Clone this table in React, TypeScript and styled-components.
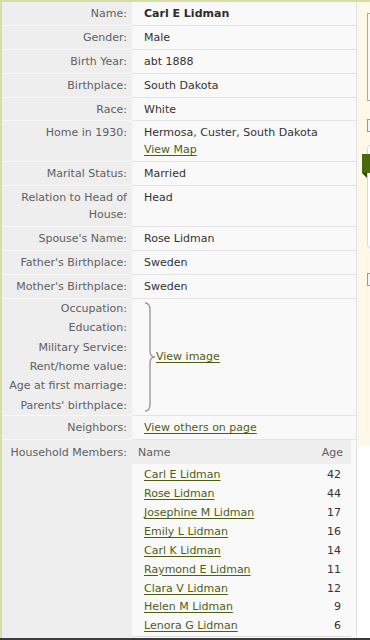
import React, { ReactNode } from "react";
import styled, { createGlobalStyle } from "styled-components";

const GlobalStyle = createGlobalStyle`
  html, body {
    margin: 0;
    padding: 0;
    background: #fff;
  }
  body {
    font-family: Verdana, "DejaVu Sans", sans-serif;
    font-size: 11px;
    color: #333;
  }
`;

type FieldType = {
  label: string;
  value: ReactNode;
};

const imageFields = [
  "Occupation:",
  "Education:",
  "Military Service:",
  "Rent/home value:",
  "Age at first marriage:",
  "Parents' birthplace:",
];

const household = [
  { name: "Carl E Lidman", age: 42 },
  { name: "Rose Lidman", age: 44 },
  { name: "Josephine M Lidman", age: 17 },
  { name: "Emily L Lidman", age: 16 },
  { name: "Carl K Lidman", age: 14 },
  { name: "Raymond E Lidman", age: 11 },
  { name: "Clara V Lidman", age: 12 },
  { name: "Helen M Lidman", age: 9 },
  { name: "Lenora G Lidman", age: 6 },
];

const App = () => {
  const fields: FieldType[] = [
    { label: "Name:", value: <strong>Carl E Lidman</strong> },
    { label: "Gender:", value: "Male" },
    { label: "Birth Year:", value: "abt 1888" },
    { label: "Birthplace:", value: "South Dakota" },
    { label: "Race:", value: "White" },
    {
      label: "Home in 1930:",
      value: (
        <>
          Hermosa, Custer, South Dakota
          <br />
          <TextLink href="#">View Map</TextLink>
        </>
      ),
    },
    { label: "Marital Status:", value: "Married" },
    { label: "Relation to Head of House:", value: "Head" },
    { label: "Spouse's Name:", value: "Rose Lidman" },
    { label: "Father's Birthplace:", value: "Sweden" },
    { label: "Mother's Birthplace:", value: "Sweden" },
  ];

  return (
    <>
      <GlobalStyle />
      <Page>
        <Main>
          {fields.map((f, i) => (
            <Row key={i}>
              <Label>{f.label}</Label>
              <Value>{f.value}</Value>
            </Row>
          ))}
          <Row>
            <Label $tight>
              {imageFields.map((l, i) => (
                <div key={i}>{l}</div>
              ))}
            </Label>
            <BraceValue>
              <svg width="12" height="110" viewBox="0 0 12 110">
                <path
                  d="M1 1 Q6 1 6 8 L6 49 Q6 55 11 55 Q6 55 6 61 L6 102 Q6 109 1 109"
                  fill="none"
                  stroke="#9a9a9a"
                  strokeWidth="1.4"
                />
              </svg>
              <TextLink href="#">View image</TextLink>
            </BraceValue>
          </Row>
          <Row>
            <Label>Neighbors:</Label>
            <Value>
              <TextLink href="#">View others on page</TextLink>
            </Value>
          </Row>
          <Row $grow>
            <Label $last>Household Members:</Label>
            <HouseholdCell>
              <HouseTable>
                <HouseHead>
                  <span>Name</span>
                  <span>Age</span>
                </HouseHead>
                <HouseBody>
                  {household.map((m, i) => (
                    <HouseRow key={i}>
                      <TextLink href="#">{m.name}</TextLink>
                      <span>{m.age}</span>
                    </HouseRow>
                  ))}
                </HouseBody>
              </HouseTable>
            </HouseholdCell>
          </Row>
        </Main>
        <Side>
          <SidePanel>
            <FrameBox />
            <CheckBox />
            <TabPanel>
              <GreenTab />
            </TabPanel>
            <CheckBox $late />
          </SidePanel>
        </Side>
      </Page>
    </>
  );
};

const Page = styled.div`
  width: 370px;
  height: 640px;
  box-sizing: border-box;
  overflow: hidden;
  display: flex;
  border-top: 2px solid #d6dea6;
  border-bottom: 2px solid #3b3b3b;
`;

const Main = styled.div`
  flex: 0 0 357px;
  box-sizing: border-box;
  display: flex;
  flex-direction: column;
  border-left: 2px solid #d6dea6;
  border-right: 1px solid #e2e2e2;
  background: #f9f9f9;
`;

const Row = styled.div<{ $grow?: boolean }>`
  display: grid;
  grid-template-columns: 130px 1fr;
  ${({ $grow }) => ($grow ? "flex: 1;" : "")}
`;

const Label = styled.div<{ $tight?: boolean; $last?: boolean }>`
  background: #eeeeee;
  color: #606060;
  text-align: right;
  padding: ${({ $tight, $last }) =>
    $tight ? "0 5px 0 4px" : $last ? "4px 5px 0 4px" : "3px 5px 2.9px 4px"};
  line-height: ${({ $tight }) => ($tight ? "19.4px" : "17px")};
  border-bottom: ${({ $last }) => ($last ? "none" : "1px solid #f7f7f7")};
`;

const Value = styled.div`
  padding: 3px 6px 2.9px 12px;
  line-height: 17px;
  border-bottom: 1px solid #e4e4e4;
  strong {
    font-weight: bold;
    color: #2c2c2c;
  }
`;

const BraceValue = styled(Value)`
  display: flex;
  align-items: center;
  padding-top: 0;
  padding-bottom: 0;
  line-height: 19.4px;
`;

const TextLink = styled.a`
  color: #4f5e14;
  text-decoration: underline;
  text-underline-offset: 2px;
`;

const HouseholdCell = styled.div`
  padding-right: 5px;
`;

const HouseTable = styled.div`
  display: flex;
  flex-direction: column;
  border-bottom: 1px solid #dcdcdc;
`;

const HouseHead = styled.div`
  display: flex;
  justify-content: space-between;
  background: #eeeeee;
  color: #606060;
  padding: 4px 8px 3px 6px;
  line-height: 17px;
`;

const HouseBody = styled.div`
  display: flex;
  flex-direction: column;
  padding-top: 2px;
`;

const HouseRow = styled.div`
  display: flex;
  justify-content: space-between;
  padding: 0 10px 0 12px;
  line-height: 18.9px;
  color: #333;
`;

const Side = styled.div`
  flex: 0 0 200px;
  display: flex;
  flex-direction: column;
  background: #fff;
`;

const SidePanel = styled.div`
  height: 444px;
  box-sizing: border-box;
  background: #fdf8e7;
  padding: 11px 0 0 10px;
  display: flex;
  flex-direction: column;
  align-items: flex-start;
`;

const FrameBox = styled.div`
  width: 180px;
  height: 86px;
  border: 1px solid #a8a8a8;
  background: #fbf8f0;
`;

const CheckBox = styled.div<{ $late?: boolean }>`
  width: 11px;
  height: 11px;
  margin-top: ${({ $late }) => ($late ? "24px" : "18px")};
  border: 1px solid #9a9a9a;
  background: #f4f4f4;
`;

const TabPanel = styled.div`
  position: relative;
  width: 180px;
  height: 103px;
  margin-top: 12px;
  border: 1px solid #d8d8d8;
  border-radius: 5px;
  background: #fff;
`;

const GreenTab = styled.div`
  position: absolute;
  left: -6px;
  top: 9px;
  width: 30px;
  height: 19px;
  background: #4a6a0c;
  &::after {
    content: "";
    position: absolute;
    left: 0;
    bottom: -5px;
    border-top: 5px solid #2f4506;
    border-left: 5px solid transparent;
  }
`;

export default App;
